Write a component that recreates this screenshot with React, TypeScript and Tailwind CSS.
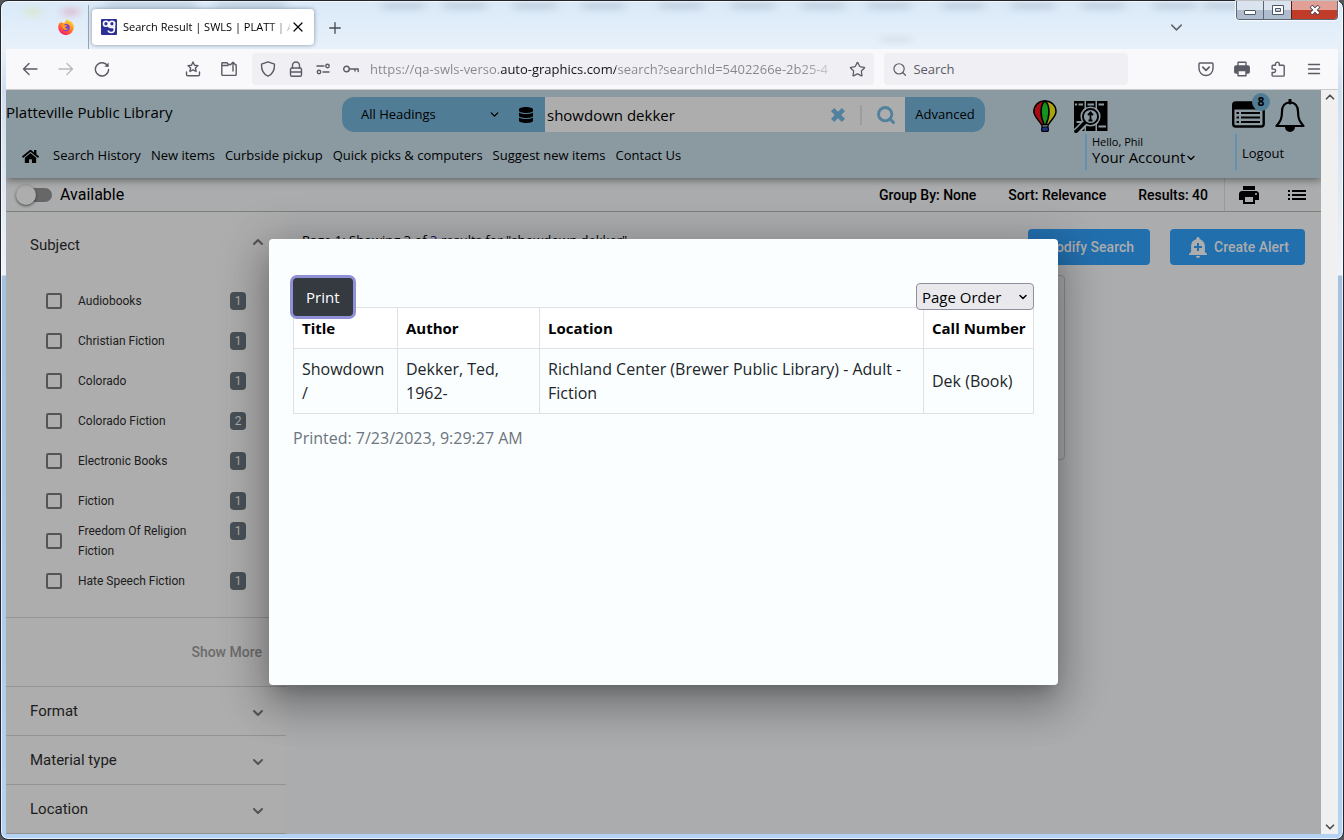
import { useState } from 'react'
import type { ReactNode } from 'react'
import { ChevronDown, ChevronUp, Plus, Search, Star, X } from 'lucide-react'
import { FaDatabase, FaHome } from 'react-icons/fa'
import { MdAddAlert, MdList, MdPrint } from 'react-icons/md'

const subjects = [
  { name: 'Audiobooks', count: 1 },
  { name: 'Christian Fiction', count: 1 },
  { name: 'Colorado', count: 1 },
  { name: 'Colorado Fiction', count: 2 },
  { name: 'Electronic Books', count: 1 },
  { name: 'Fiction', count: 1 },
  { name: 'Freedom Of Religion Fiction', count: 1 },
  { name: 'Hate Speech Fiction', count: 1 },
]

const navLinks = [
  'Search History',
  'New items',
  'Curbside pickup',
  'Quick picks & computers',
  'Suggest new items',
  'Contact Us',
]

const collapsed = ['Format', 'Material type', 'Location']

// Blurred desktop text that shows through the window's glass title bar
const smudges = [400, 462, 532, 600, 678, 750, 820, 886, 960, 1030, 1100, 1172, 1222]

function FirefoxLogo() {
  return (
    <svg width="16" height="16" viewBox="0 0 16 16" aria-hidden="true">
      <defs>
        <linearGradient id="fox" x1="0.8" y1="0" x2="0.2" y2="1">
          <stop offset="0" stopColor="#ffe43a" />
          <stop offset="0.45" stopColor="#ff8a1f" />
          <stop offset="0.8" stopColor="#ff3750" />
          <stop offset="1" stopColor="#eb0f70" />
        </linearGradient>
      </defs>
      <path
        d="M9.6.2c.6 1.2 1.8 1.7 2.7 2.6.1-.4 0-.8-.1-1.2 2 1.300 3.600 3.700 3.600 6.600A7.800 7.800 0 0 1 .2 8.300c0-2 .6-3.700 1.500-4.900l.2 1.200c.5-.8 1-1.500 1.700-2l.3 1.500c1-.3 2-.2 2.800.1C7 2.700 8 1 9.600.2z"
        fill="url(#fox)"
      />
      <circle cx="8.200" cy="8.600" r="3.600" fill="#7a3fe0" />
      <path d="M3.600 5.500c1.700-.6 3 0 3.700.8 1 .1 1.700.4 1.700.8-.4.8-1.600.8-1.900 1.500.4 1.200 2.200 1.600 3.600.6-.7 1.900-4.100 2.500-5.700.5-1-1.200-1.500-2.800-1.400-4.200z" fill="#ff9a1f" />
    </svg>
  )
}

function SiteIcon() {
  return (
    <svg width="16" height="16" viewBox="0 0 16 16" fill="none" className="shrink-0" aria-hidden="true">
      <rect width="16" height="16" rx="1" fill="#2b2f96" />
      <g stroke="#fff" strokeWidth="1.600">
        <circle cx="5" cy="4.800" r="2.500" />
        <circle cx="11" cy="4.800" r="2.500" />
        <path d="M13.500 3v6.500" />
        <path d="M7.500 4.500v1.500c0 2 1 2.500 2.500 2.500h2c2 0 2 5-1.500 5-2 0-3.200-.8-3.200-2" />
      </g>
    </svg>
  )
}

function BalloonIcon() {
  return (
    <svg width="24" height="32" viewBox="0 0 24 32" aria-hidden="true">
      <path d="M12 1C5.500 1 1 5.500 1 11.500c0 5 5 8.500 7.500 13h7c2.500-4.500 7.500-8 7.500-13C23 5.500 18.500 1 12 1z" fill="#a9a40b" stroke="#000" strokeWidth="1.500" />
      <path d="M12 1C5.500 1 1 5.500 1 11.500c0 5 5 8.500 7.500 13H12z" fill="#a60c10" stroke="#000" strokeWidth="1.200" />
      <path d="M12 1C9.500 3 8 7 8 12s1.500 9 3 12.500h2c1.500-3.500 3-7.500 3-12.500s-1.500-9-4-11z" fill="#14941f" stroke="#000" strokeWidth="1.600" />
      <path d="M8.500 24.500l1 3m6-3l-1 3" stroke="#000" strokeWidth="1.200" />
      <rect x="8.700" y="27" width="6.600" height="4.400" rx="1" fill="#1b3386" stroke="#000" strokeWidth="1.200" />
    </svg>
  )
}

function ShelfSearchIcon() {
  return (
    <svg width="34" height="33" viewBox="0 0 34 33" fill="none" aria-hidden="true">
      <path d="M0 1h10.500v30H0zM12 1h9.500v30H12zM23 1h10.500v30H23z" fill="#000" />
      <path d="M2 3.500v2M4.500 4.500H9M13.500 4.500H20M24.500 4.500H30M2.500 22h6M24.500 26.500H32" stroke="#8b9aa1" strokeWidth="2.200" />
      <circle cx="16.500" cy="16.500" r="7.500" fill="#8b9aa1" stroke="#000" strokeWidth="1.800" />
      <circle cx="16.500" cy="16.500" r="9.300" stroke="#8b9aa1" strokeWidth="1.600" />
      <path d="M10 24l-8 8" stroke="#8b9aa1" strokeWidth="7" />
      <path d="M10.500 23l-8.500 8.500" stroke="#000" strokeWidth="3.400" strokeLinecap="round" />
      <path d="M16.500 20.500v-7M14 15.200l2.500-2.800 2.500 2.800M14.500 20.500h4" stroke="#000" strokeWidth="1.800" />
    </svg>
  )
}

function ListsIcon() {
  return (
    <svg width="33" height="27" viewBox="0 0 33 27" fill="none" stroke="#000" aria-hidden="true">
      <rect x="1.200" y="1.500" width="30.500" height="24" rx="2.500" strokeWidth="2.400" />
      <path d="M1 5h31" strokeWidth="7" />
      <path d="M9 12h19M9 16.500h19M9 21h19M4.500 12H7M4.500 16.500H7M4.500 21H7" strokeWidth="2.200" />
    </svg>
  )
}

function BellIcon() {
  return (
    <svg width="30" height="33" viewBox="0 0 30 33" fill="none" aria-hidden="true">
      <path d="M15 3.500c-5.500 0-8 4-8 9 0 7-1.500 10-5.500 14.500h27C24.500 22.500 23 19.500 23 12.500c0-5-2.500-9-8-9z" stroke="#000" strokeWidth="2.200" strokeLinejoin="round" />
      <path d="M15 1v3" stroke="#000" strokeWidth="3" strokeLinecap="round" />
      <path d="M10 28h10a5 5 0 0 1-10 0z" fill="#000" />
    </svg>
  )
}

function Glyph({ children }: { children: ReactNode }) {
  return (
    <svg width="16" height="16" viewBox="0 0 16 16" fill="none" stroke="currentColor" strokeWidth="1.400" strokeLinecap="round" strokeLinejoin="round" aria-hidden="true">
      {children}
    </svg>
  )
}

function ToolButton({ label, dim, children }: { label: string; dim?: boolean; children: ReactNode }) {
  return (
    <button aria-label={label} className={dim ? 'flex w-9 justify-center text-[#b9b9be]' : 'flex w-9 justify-center text-[#5b5b66]'}>
      {children}
    </button>
  )
}

function TitleBar() {
  return (
    <div className="relative flex h-12 shrink-0 items-start">
      <svg className="absolute inset-0 h-full w-full" aria-hidden="true">
        <filter id="soft">
          <feGaussianBlur stdDeviation="5 3" />
        </filter>
        <g filter="url(#soft)" fill="#8d9cab" opacity="0.35">
          {smudges.map((x) => (
            <rect key={x} x={x - 24} y="2" width="42" height="6" />
          ))}
          <rect x="100" y="1" width="90" height="6" />
          <rect x="210" y="1" width="70" height="6" />
          <rect x="875" y="36" width="30" height="5" opacity="0.6" />
          <rect x="20" y="8" width="14" height="6" fill="#d2e264" />
          <rect x="57" y="8" width="15" height="6" fill="#e0506a" />
        </g>
      </svg>
      <div className="relative mt-1 flex h-11 w-[83px] shrink-0 items-center justify-end border-r border-[#9aa5b1] pr-[14px]">
        <FirefoxLogo />
      </div>
      <div className="relative mt-2 ml-[3px] flex h-9 w-[222px] items-center rounded bg-white pr-2 pl-[9px] shadow-[0_0_4px_rgba(60,80,110,0.6)]">
        <SiteIcon />
        <span className="ml-[6px] min-w-0 flex-1 bg-[linear-gradient(to_right,#000_145px,transparent_172px)] bg-clip-text text-[11px] whitespace-nowrap text-transparent">
          Search Result | SWLS | PLATT | A
        </span>
        <button aria-label="Close tab">
          <X size={16} strokeWidth={1.800} />
        </button>
      </div>
      <button aria-label="New tab" className="relative mt-[18px] ml-3 text-[#4a4a52]">
        <Plus size={18} strokeWidth={1.800} />
      </button>
      <div className="flex-1" />
      <button aria-label="List all tabs" className="relative mt-[17px] mr-[50px] text-[#5b6069]">
        <ChevronDown size={19} strokeWidth={1.800} />
      </button>
      <div className="relative flex h-[19px] overflow-hidden rounded-b border border-t-0 border-[#5a6675] shadow-[0_0_1px_1px_rgba(255,255,255,0.8)]">
        <button aria-label="Minimize" className="flex w-[27px] items-center justify-center border-r border-[#5a6675] bg-linear-to-b from-[#dbe4ee] from-50% to-[#aebccd] to-50%">
          <span className="mt-1 h-[5px] w-3 rounded-[1px] border border-[#4e5765] bg-white" />
        </button>
        <button aria-label="Maximize" className="flex w-[27px] items-center justify-center bg-linear-to-b from-[#dbe4ee] from-50% to-[#aebccd] to-50%">
          <svg width="12" height="10" viewBox="0 0 12 10" aria-hidden="true">
            <path d="M.5.5h11v9H.5zM3.500 3.500v3h5v-3z" fill="#fff" fillRule="evenodd" stroke="#4e5765" />
          </svg>
        </button>
        <button aria-label="Close" className="flex w-[46px] items-center justify-center border-l border-[#5b1a14] bg-linear-to-b from-[#e0a095] from-50% to-[#c03c28] to-50%">
          <svg width="12" height="10" viewBox="0 0 12 10" aria-hidden="true">
            <path d="M2 1l8 8m0-8L2 9" stroke="#4e4450" strokeWidth="4" />
            <path d="M2.500 1.500l7 7m0-7l-7 7" stroke="#fff" strokeWidth="2.400" />
          </svg>
        </button>
      </div>
    </div>
  )
}

function BrowserToolbar() {
  return (
    <div className="flex h-[41px] shrink-0 items-center border-b border-[#cccccf] bg-[#f9f9fb] pl-[6px] text-[#5b5b66]">
      <ToolButton label="Back">
        <Glyph><path d="M15 8H1.500M7 2.500L1.500 8 7 13.500" /></Glyph>
      </ToolButton>
      <ToolButton label="Forward" dim>
        <Glyph><path d="M1 8h13.500M9 2.500L14.500 8 9 13.500" /></Glyph>
      </ToolButton>
      <ToolButton label="Reload">
        <Glyph>
          <path d="M13.800 5.200A6.600 6.600 0 1 0 14.600 8.500" />
          <path d="M14.600 1.500v4.200h-4.200z" fill="currentColor" stroke="none" />
        </Glyph>
      </ToolButton>
      <div className="w-[55px]" />
      <ToolButton label="Bookmarks">
        <Glyph>
          <path d="M8 1l1.500 3.200 3.500.4-2.600 2.400.7 3.500L8 8.800l-3.100 1.700.7-3.500L3 4.600l3.500-.4z" />
          <path d="M1.500 11v2.500c0 .8.500 1.300 1.300 1.300h10.400c.8 0 1.300-.5 1.300-1.300V11" />
        </Glyph>
      </ToolButton>
      <ToolButton label="Open file">
        <Glyph>
          <path d="M9 3.500H7.500L6 1.800H1.500C1 1.800.8 2 .8 2.500v11c0 .6.300.9.900.9h12.600c.6 0 .9-.3.900-.9v-9c0-.6-.3-1-.9-1M1 4.500h6M12 10V1.500M9.500 3.800L12 1.200l2.500 2.600" />
        </Glyph>
      </ToolButton>
      <div className="ml-[5px] flex h-8 flex-1 items-center rounded bg-[#f0eff4]">
        <span className="flex w-[118px] shrink-0 items-center justify-between pl-2">
          <Glyph><path d="M8 .8l6.500 2.400c.2 5.800-1.500 9.800-6.500 12-5-2.200-6.700-6.200-6.500-12z" /></Glyph>
          <Glyph>
            <rect x="2.500" y="7" width="11" height="8.200" rx="1.500" />
            <path d="M4.500 7V4.500a3.500 3.500 0 0 1 7 0V7M3 11h10" />
          </Glyph>
          <Glyph>
            <path d="M2 5h7M8 11h6" />
            <circle cx="12.500" cy="5" r="1.700" />
            <circle cx="4" cy="11" r="1.700" />
          </Glyph>
          <Glyph>
            <circle cx="3.500" cy="8" r="2.800" />
            <path d="M6.500 8h8.700v2.500M12 8v2" />
          </Glyph>
          <span />
        </span>
        <input
          aria-label="Address"
          readOnly
          value="https://qa-swls-verso.auto-graphics.com/search?searchId=5402266e-2b25-4"
          className="min-w-0 flex-1 bg-[linear-gradient(to_right,#86858c_131px,#15141a_131px,#15141a_246px,#86858c_246px,#86858c_430px,transparent_474px)] bg-clip-text pt-[2px] text-[13px] text-transparent outline-none"
        />
        <button aria-label="Bookmark this page" className="px-2">
          <Star size={17} strokeWidth={1.800} />
        </button>
      </div>
      <label className="ml-[10px] flex h-8 w-[244px] items-center gap-[6px] rounded bg-[#f0eff4] px-2">
        <Search size={17} strokeWidth={1.800} className="text-[#5b5b66]" />
        <input aria-label="Search the web" placeholder="Search" className="w-full pt-[2px] text-[13px] outline-none placeholder:text-[#5b5b66]" />
      </label>
      <div className="w-[60px]" />
      <ToolButton label="Save to Pocket">
        <Glyph>
          <path d="M2 2h12c.6 0 1 .4 1 1v4.500a7 7 0 0 1-14 0V3c0-.6.400-1 1-1z" />
          <path d="M4.800 6.200L8 9.300l3.200-3.100" strokeWidth="1.700" />
        </Glyph>
      </ToolButton>
      <ToolButton label="Print page">
        <Glyph>
          <path d="M4 4.500V1.800c0-.4.200-.6.600-.6h6.800c.4 0 .6.200.6.600v2.700" />
          <path d="M2 5h12c.7 0 1.200.5 1.200 1.200V11c0 .7-.5 1-1.200 1H2c-.7 0-1.200-.3-1.200-1V6.200C.8 5.500 1.300 5 2 5z" fill="currentColor" />
          <path d="M4 9.500h8v5.300H4z" fill="#f9f9fb" />
        </Glyph>
      </ToolButton>
      <ToolButton label="Extensions">
        <Glyph>
          <path d="M5.500 4.300V3a1.900 1.900 0 0 1 3.800 0v1.300h4c.6 0 .9.300.9.900v9c0 .600-.3.900-.9.900H3c-.6 0-.9-.3-.9-.9v-2.700h1.800a1.700 1.700 0 0 0 0-3.400H2.100V5.200c0-.6.300-.9.900-.9z" />
        </Glyph>
      </ToolButton>
      <ToolButton label="Application menu">
        <Glyph><path d="M2.500 3.500h11M2.500 8h11M2.500 12.500h11" /></Glyph>
      </ToolButton>
      <div className="w-[6px]" />
    </div>
  )
}

function SiteHeader() {
  return (
    <header className="relative z-10 grid h-[88px] shrink-0 grid-cols-[1fr_643px_1fr] grid-rows-[44px_44px] bg-[#8b9aa1] text-black shadow-[0_2px_8px_rgba(0,0,0,0.45)]">
      <div className="pt-2 text-[15px] leading-7">Platteville Public Library</div>
      <form className="mt-[7px] flex h-[35px] overflow-hidden rounded-xl bg-[#adadad]" onSubmit={(e) => e.preventDefault()}>
        <div className="relative flex w-[203px] items-center bg-[#517c96]">
          <select aria-label="Search in" className="h-full w-[168px] appearance-none pl-[19px] text-[13px] outline-none">
            <option>All Headings</option>
          </select>
          <ChevronDown size={13} strokeWidth={2.500} className="pointer-events-none absolute right-[44px]" />
          <button aria-label="Choose databases" className="ml-2">
            <FaDatabase size={16} />
          </button>
        </div>
        <input aria-label="Search terms" defaultValue="showdown dekker" className="min-w-0 flex-1 pt-px pl-[2px] text-[15px] outline-none" />
        <div className="flex items-center text-[#52819d]">
          <button type="button" aria-label="Clear search">
            <svg width="16" height="16" viewBox="0 0 16 16" stroke="currentColor" strokeWidth="4.600" aria-hidden="true">
              <path d="M2.600 2.600l10.800 10.800M13.400 2.600L2.600 13.400" />
            </svg>
          </button>
          <span className="mx-[14px] h-5 w-[2px] bg-[#9b9d9e]" />
          <button aria-label="Search">
            <Search size={20} strokeWidth={3.500} />
          </button>
          <button type="button" className="ml-[9px] h-[35px] w-20 bg-[#517c96] text-[13px] text-black">
            Advanced
          </button>
        </div>
      </form>
      <div className="row-span-2 flex justify-between pr-4 pl-12">
        <div>
          <div className="flex h-11 items-start gap-[17px] pt-[10px]">
            <a href="#kids" aria-label="Kids catalog"><BalloonIcon /></a>
            <a href="#shelf" aria-label="Browse the shelf"><ShelfSearchIcon /></a>
          </div>
          <button className="ml-[52px] flex h-9 flex-col justify-start border-l-2 border-[#6391ae] pl-[5px] text-left">
            <span className="text-[11px] leading-[15px]">Hello, Phil</span>
            <span className="flex items-center text-[15px] leading-[17px]">
              Your Account
              <ChevronDown size={12} strokeWidth={2.500} />
            </span>
          </button>
        </div>
        <div>
          <div className="flex h-11 items-start gap-[10px] pt-[9px]">
            <a href="#lists" aria-label="Lists" className="relative pt-[2px]">
              <ListsIcon />
              <span className="absolute -top-[6px] left-5 flex size-[18px] items-center justify-center rounded-full bg-[#517c96] text-xs font-bold">8</span>
            </a>
            <a href="#alerts" aria-label="Notifications"><BellIcon /></a>
          </div>
          <button className="ml-[3px] h-9 border-l-2 border-[#6391ae] pt-[3px] pl-[5px] text-[13px]">Logout</button>
        </div>
      </div>
      <nav className="col-span-2 flex items-center gap-[14px] pl-4 text-[13px] whitespace-nowrap">
        <a href="#home" aria-label="Home">
          <FaHome size={17} />
        </a>
        <div className="flex gap-[10px]">
          {navLinks.map((link) => (
            <a key={link} href="#nav">{link}</a>
          ))}
        </div>
      </nav>
    </header>
  )
}

function FilterBar() {
  return (
    <div className="flex h-[34px] shrink-0 items-center border-b border-[#7d807e] bg-[#abacad] pr-3 pl-[10px] font-[Roboto,sans-serif] text-sm font-medium text-black shadow-[0_1px_1px_rgba(0,0,0,0.15)]">
      <label className="flex items-center gap-2 text-base font-normal">
        <input
          type="checkbox"
          className="relative ml-[6px] h-[14px] w-[30px] appearance-none rounded-full bg-[#676767] before:absolute before:-top-[3px] before:-left-[6px] before:size-5 before:rounded-full before:bg-[#adadad] before:shadow-[0_1px_3px_rgba(0,0,0,0.6)]"
        />
        Available
      </label>
      <div className="flex-1" />
      <button>Group By: None</button>
      <button className="ml-8">Sort: Relevance</button>
      <span className="ml-8">Results: 40</span>
      <div className="ml-4 flex h-full items-center gap-6 border-l border-[#999a9a] pl-3">
        <button aria-label="Print results"><MdPrint size={24} /></button>
        <button aria-label="List view"><MdList size={24} /></button>
      </div>
    </div>
  )
}

function Sidebar() {
  return (
    <aside className="w-[280px] shrink-0 overflow-hidden bg-[#adadad] font-[Roboto,sans-serif] text-[15px] text-[#1c1c1c]">
      <section className="border-b border-[#939393] pb-4">
        <button className="flex h-[66px] w-full items-center justify-between pr-5 pl-6">
          Subject
          <ChevronUp size={16} strokeWidth={3} className="mb-[6px] text-[#555]" />
        </button>
        <ul className="mt-[3px] pr-10 pl-10 text-xs leading-5">
          {subjects.map((s) => (
            <li key={s.name}>
              <label className="flex h-10 items-center gap-4">
                <input type="checkbox" className="size-4 shrink-0 appearance-none rounded-[2px] border-2 border-[#555]" />
                <span className="flex flex-1 items-start justify-between">
                  <span className="w-[120px]">{s.name}</span>
                  <span className="mt-px flex h-[18px] w-4 items-center justify-center rounded bg-[#495057] text-[#adadad]">{s.count}</span>
                </span>
              </label>
            </li>
          ))}
        </ul>
      </section>
      <div className="flex h-[69px] items-center justify-end border-b border-[#939393] pr-6">
        <button className="text-sm font-medium text-[#6c6c6c]">Show More</button>
      </div>
      {collapsed.map((name) => (
        <button key={name} className="flex h-[49px] w-full items-center justify-between border-b border-[#939393] pr-5 pl-6">
          {name}
          <ChevronDown size={16} strokeWidth={3} className="mt-1 text-[#555]" />
        </button>
      ))}
    </aside>
  )
}

function Results() {
  return (
    <main className="flex-1 bg-[#abacae] pr-4 pl-4">
      <div className="flex items-start justify-between pt-[17px]">
        <p className="pt-px text-[13px] leading-5 text-black">
          Page 1: Showing 3 of <a href="#all" className="text-[#10106e]">3</a> results for "showdown dekker"
        </p>
        <div className="flex gap-5 font-[Roboto,sans-serif] text-sm font-medium text-[#adadad]">
          <button className="h-9 rounded bg-[#226fae] px-4">Modify Search</button>
          <button className="flex h-9 items-center gap-1 rounded bg-[#226fae] px-4">
            <MdAddAlert size={24} />
            Create Alert
          </button>
        </div>
      </div>
      <div className="mt-[10px] mr-60 h-[185px] rounded border border-[#8d8e90]" />
    </main>
  )
}

function PrintDialog() {
  const [order, setOrder] = useState('Page Order')

  return (
    <div className="absolute inset-0 z-20 flex items-center justify-center">
      <div role="dialog" aria-label="Print list" className="h-3/5 w-3/5 rounded bg-[#fafeff] px-6 pt-[39px] text-base leading-6 text-[#212529] shadow-[0_11px_15px_-7px_rgba(0,0,0,0.2),0_24px_38px_3px_rgba(0,0,0,0.14),0_9px_46px_8px_rgba(0,0,0,0.22)]">
        <div className="relative z-10 -mb-[9px] flex h-[38px] items-center justify-between text-[15px]">
          <button className="h-[38px] rounded bg-[#343a40] px-[13px] text-white ring-3 ring-[#9090d6]">Print</button>
          <div className="relative">
            <select
              aria-label="Order"
              value={order}
              onChange={(e) => setOrder(e.target.value)}
              className="h-[27px] w-[118px] appearance-none rounded border border-[#8f8f9d] bg-[#e9e9ed] pl-[5px] leading-6 text-black"
            >
              <option>Page Order</option>
              <option>Title</option>
            </select>
            <ChevronDown size={12} strokeWidth={3} className="pointer-events-none absolute top-2 right-[5px] text-black" />
          </div>
        </div>
        <table className="w-full table-fixed border-collapse text-left">
          <thead className="bg-white text-[15px] leading-6 text-black">
            <tr>
              <th className="w-[104px] border border-[#dee2e6] p-2">Title</th>
              <th className="w-[142px] border border-[#dee2e6] p-2">Author</th>
              <th className="border border-[#dee2e6] p-2">Location</th>
              <th className="w-[110px] border border-[#dee2e6] p-2 whitespace-nowrap">Call Number</th>
            </tr>
          </thead>
          <tbody>
            <tr>
              <td className="border border-[#dee2e6] p-2">Showdown /</td>
              <td className="border border-[#dee2e6] p-2">Dekker, Ted, 1962-</td>
              <td className="border border-[#dee2e6] p-2">Richland Center (Brewer Public Library) - Adult - Fiction</td>
              <td className="border border-[#dee2e6] p-2">Dek (Book)</td>
            </tr>
          </tbody>
        </table>
        <p className="mt-3 text-[#6c757d]">Printed: 7/23/2023, 9:29:27 AM</p>
      </div>
    </div>
  )
}

export default function App() {
  return (
    <div className="h-screen bg-[#55565c] font-['Open_Sans',sans-serif]">
      <div className="flex h-full flex-col rounded-lg border border-[#22252b] bg-[linear-gradient(to_bottom,#d9e9f8_0,#e8f1fa_48px,#cfdff0_90px,#eef3fa_274px,#a6c1e0_275px,#b4d2f3_100%)] px-[5px] pb-[5px] shadow-[inset_0_0_0_1px_rgba(255,255,255,0.7)]">
        <TitleBar />
        <BrowserToolbar />
        <div className="flex min-h-0 flex-1">
          <div className="relative flex min-w-0 flex-1 flex-col overflow-hidden">
            <SiteHeader />
            <FilterBar />
            <div className="flex min-h-0 flex-1">
              <Sidebar />
              <Results />
            </div>
            <PrintDialog />
          </div>
          <div className="flex w-[17px] shrink-0 flex-col items-center justify-between bg-[#f0f0f0] text-[#505050]">
            <ChevronUp size={14} strokeWidth={3} />
            <ChevronDown size={14} strokeWidth={3} />
          </div>
        </div>
      </div>
    </div>
  )
}
